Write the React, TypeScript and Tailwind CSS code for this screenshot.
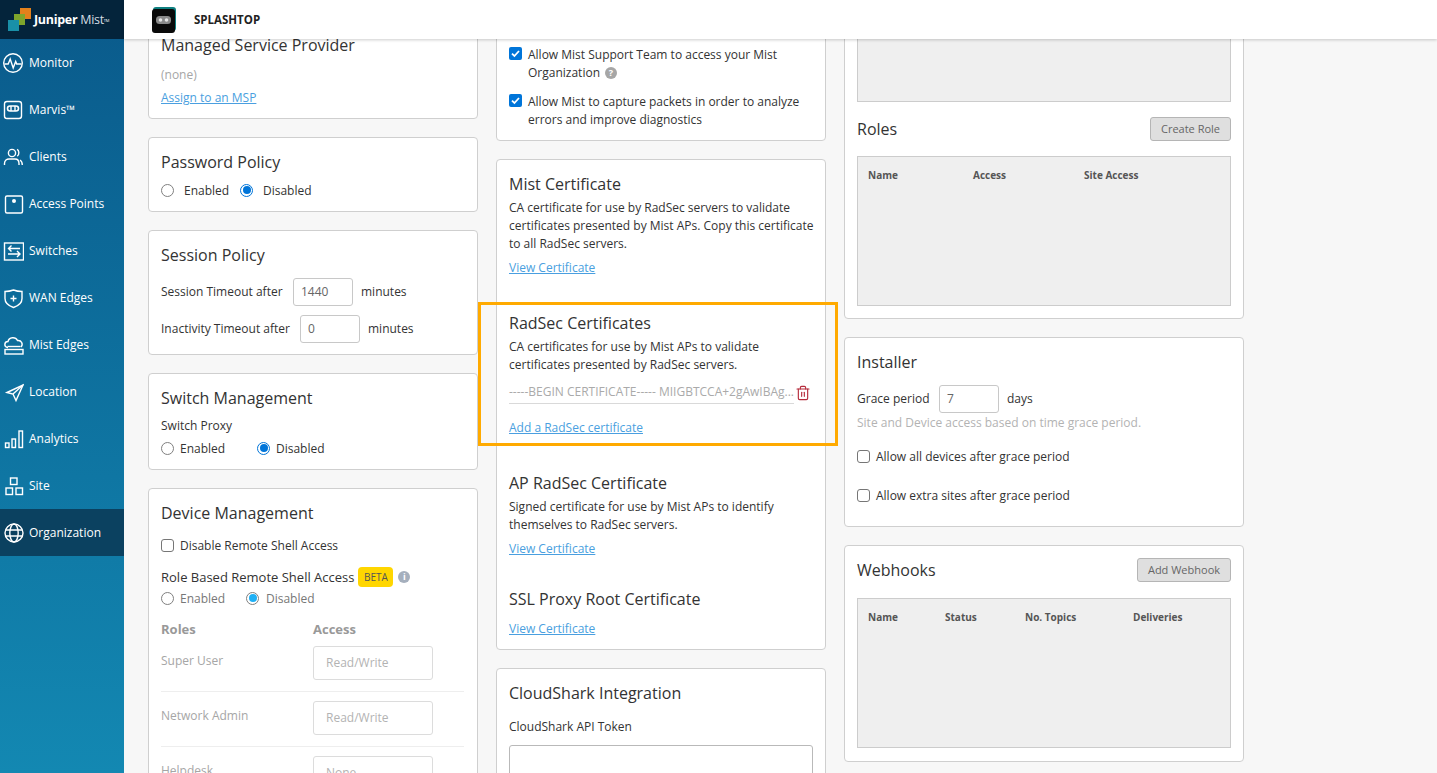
import React from 'react';
import { Trash2 } from 'lucide-react';

const navItems = [
  { label: 'Monitor', icon: 'monitor' },
  { label: 'Marvis™', icon: 'marvis' },
  { label: 'Clients', icon: 'clients' },
  { label: 'Access Points', icon: 'ap' },
  { label: 'Switches', icon: 'switches' },
  { label: 'WAN Edges', icon: 'wan' },
  { label: 'Mist Edges', icon: 'mist' },
  { label: 'Location', icon: 'location' },
  { label: 'Analytics', icon: 'analytics' },
  { label: 'Site', icon: 'site' },
  { label: 'Organization', icon: 'org' },
];

const NavIcon: React.FC<{ name: string }> = ({ name }) => {
  const common = { width: 22, height: 22, viewBox: '0 0 22 22', fill: 'none', stroke: 'white', strokeWidth: 1.4 };
  switch (name) {
    case 'monitor':
      return (
        <svg {...common}>
          <circle cx="11" cy="11" r="9.3" />
          <path d="M2.5 12h3.7l2-5 3 9 2.5-6.5 1 2.5h4.8" />
        </svg>
      );
    case 'marvis':
      return (
        <svg {...common}>
          <rect x="2.5" y="2.5" width="17" height="17" rx="2.5" />
          <rect x="5.5" y="7" width="11" height="5" rx="2.5" strokeWidth="1.6" />
          <path d="M9 7v5M13 7v5" />
        </svg>
      );
    case 'clients':
      return (
        <svg {...common}>
          <circle cx="10" cy="7" r="3.6" />
          <path d="M2.5 19v-1.5c0-3 2.5-4.5 4.5-4.5h6c2.2 0 4 1.7 4 4.500V19" />
          <path d="M15 3.400c2.300.8 2.600 5.600.2 6.800M18 14c1.200.7 2.300 2 2.300 5" />
        </svg>
      );
    case 'ap':
      return (
        <svg {...common}>
          <rect x="3.500" y="3" width="17" height="17" rx="1.500" />
          <circle cx="12" cy="8" r="2" fill="white" stroke="none" />
        </svg>
      );
    case 'switches':
      return (
        <svg {...common}>
          <rect x="2.500" y="3" width="19" height="17" />
          <path d="M18 8.500H6.500M9.500 5.500l-3 3 3 3M6 14h12M15 11l3 3-3 3" />
        </svg>
      );
    case 'wan':
      return (
        <svg {...common}>
          <path d="M3 4.500c3 0 6-.6 8.500-1.500 2.500 1 5.500 1.500 8.500 1.500v7c0 4.500-4 7.500-8.500 9-4.500-1.500-8.500-4.500-8.500-9z" />
          <path d="M8.500 11.500h6M11.500 8.500v6" />
        </svg>
      );
    case 'mist':
      return (
        <svg {...common}>
          <path d="M6 13.500H5.500c-4-1-3.200-6 .5-6 1-4.500 7.500-5 9.500-1 4-.5 6 3.700 3.500 6.500" />
          <path d="M5.500 12.500h13" />
          <rect x="3" y="15.500" width="18" height="4.500" />
        </svg>
      );
    case 'location':
      return (
        <svg {...common}>
          <path d="M5 11.500 21 4l-7 15.500-3-6.500z" />
          <path d="M11 13 21 4" />
        </svg>
      );
    case 'analytics':
      return (
        <svg {...common}>
          <rect x="3.500" y="15" width="3.500" height="4.500" />
          <rect x="10" y="11" width="3.500" height="8.500" />
          <rect x="17" y="3" width="3.500" height="16.500" />
        </svg>
      );
    case 'site':
      return (
        <svg {...common}>
          <rect x="8.500" y="3" width="6.500" height="6.500" />
          <rect x="4" y="13" width="6.500" height="6.500" />
          <rect x="14" y="13" width="6.500" height="6.500" />
        </svg>
      );
    default:
      return (
        <svg {...common}>
          <circle cx="12" cy="11" r="9" />
          <ellipse cx="12" cy="11" rx="4.200" ry="9" />
          <path d="M3.800 8h16.400M3.800 14h16.400" />
        </svg>
      );
  }
};

const Card: React.FC<{ className?: string; children: React.ReactNode }> = ({ className = '', children }) => (
  <div className={`bg-white border border-[#cfcfcf] rounded-[4px] shrink-0 px-3 ${className}`}>{children}</div>
);

const Radio: React.FC<{ on?: boolean; faded?: boolean }> = ({ on, faded }) => (
  <span className={`w-[13px] h-[13px] -mt-[2px] rounded-full flex items-center justify-center bg-white shrink-0 ${on && !faded ? 'border-[1.5px] border-[#0075d9]' : 'border border-[#808080]'}`}>
    {on && <span className={`w-[8px] h-[8px] rounded-full ${faded ? 'bg-[#1fb0f5]' : 'bg-[#0075d9]'}`}></span>}
  </span>
);

const Check: React.FC<{ on?: boolean }> = ({ on }) =>
  on ? (
    <span className="w-[13px] h-[13px] rounded-[2px] bg-[#0075d9] flex items-center justify-center shrink-0">
      <svg width="11" height="11" viewBox="0 0 11 11" fill="none" stroke="white" strokeWidth="1.8">
        <path d="M2 5.700 4.400 8 9 3" />
      </svg>
    </span>
  ) : (
    <span className="w-[13px] h-[13px] -mt-[2px] rounded-[3px] border border-[#767676] bg-white shrink-0"></span>
  );

const Title: React.FC<{ className?: string; children: React.ReactNode }> = ({ className = '', children }) => (
  <div className={`text-[16px] leading-[22px] text-[#333] ${className}`}>{children}</div>
);

const Link: React.FC<{ children: React.ReactNode }> = ({ children }) => (
  <span className="text-[12px] leading-[18px] text-[#4a9fe0] underline">{children}</span>
);

const NumInput: React.FC<{ value: string; className?: string }> = ({ value, className = '' }) => (
  <span className={`w-[60px] h-[28px] border border-[#c8c8c8] rounded-[3px] px-[7px] flex items-center text-[#666] ${className}`}>{value}</span>
);

const RoleRow: React.FC<{ label: string; value: string; last?: boolean }> = ({ label, value, last }) => (
  <div className={`flex h-[46px] w-[303px] ${last ? '' : 'border-b border-[#eeeeee]'}`}>
    <span className="w-[152px] text-[#a6a6a6] pt-[6px]">{label}</span>
    <span className="w-[120px] h-[34px] border border-[#dcdcdc] rounded-[3px] px-[12px] flex items-center text-[#b3b3b3]">{value}</span>
  </div>
);

const LeftColumn = () => (
  <div className="w-[330px] flex flex-col gap-[18px] shrink-0">
    <Card className="h-[100px] -mt-[20px] pt-[14px]">
      <Title>Managed Service Provider</Title>
      <div className="text-[#a6a6a6] mt-[10px]">(none)</div>
      <div className="mt-[5px]"><Link>Assign to an MSP</Link></div>
    </Card>
    <Card className="h-[75px] pt-[13px]">
      <Title>Password Policy</Title>
      <div className="flex items-center mt-[9px]">
        <Radio />
        <span className="ml-[10px] w-[56px]">Enabled</span>
        <Radio on />
        <span className="ml-[10px]">Disabled</span>
      </div>
    </Card>
    <Card className="h-[125px] pt-[13px]">
      <Title>Session Policy</Title>
      <div className="flex items-center mt-[12px]">
        <span className="w-[132px]">Session Timeout after</span>
        <NumInput value="1440" />
        <span className="ml-[8px]">minutes</span>
      </div>
      <div className="flex items-center mt-[9px]">
        <span className="w-[139px]">Inactivity Timeout after</span>
        <NumInput value="0" />
        <span className="ml-[8px]">minutes</span>
      </div>
    </Card>
    <Card className="h-[97px] pt-[13px]">
      <Title>Switch Management</Title>
      <div className="mt-[8px]">Switch Proxy</div>
      <div className="flex items-center mt-[5px]">
        <Radio />
        <span className="ml-[6px] w-[77px]">Enabled</span>
        <Radio on />
        <span className="ml-[6px]">Disabled</span>
      </div>
    </Card>
    <Card className="h-[300px] pt-[13px]">
      <Title>Device Management</Title>
      <div className="flex items-center mt-[13px]">
        <Check />
        <span className="ml-[6px]">Disable Remote Shell Access</span>
      </div>
      <div className="flex items-center mt-[12px] h-[20px]">
        <span className="text-[13px]">Role Based Remote Shell Access</span>
        <span className="ml-[4px] w-[35px] h-[20px] rounded-[4px] bg-[#ffd600] text-[10px] flex items-center justify-center text-[#555]">BETA</span>
        <span className="ml-[5px] w-[12px] h-[12px] rounded-full bg-[#a5afbd] text-white text-[9px] font-bold flex items-center justify-center">i</span>
      </div>
      <div className="flex items-center mt-[3px] text-[#777]">
        <Radio />
        <span className="ml-[6px] w-[66px]">Enabled</span>
        <Radio on faded />
        <span className="ml-[7px]">Disabled</span>
      </div>
      <div className="flex mt-[12px] text-[13px] font-bold text-[#999] leading-[18px]">
        <span className="w-[152px]">Roles</span>
        <span>Access</span>
      </div>
      <div className="mt-[8px]">
        <RoleRow label="Super User" value="Read/Write" />
        <div className="h-[9px]"></div>
        <RoleRow label="Network Admin" value="Read/Write" />
        <div className="h-[9px]"></div>
        <RoleRow label="Helpdesk" value="None" last />
      </div>
    </Card>
  </div>
);

const MiddleColumn = () => (
  <div className="w-[330px] flex flex-col gap-[18px] shrink-0">
    <Card className="h-[122px] -mt-[20px] pt-[26px]">
      <div className="flex gap-[6px]">
        <span className="mt-[1px]"><Check on /></span>
        <div>
          Allow Mist Support Team to access your Mist
          <br />
          Organization
          <span className="inline-flex align-middle ml-[5px] mb-[2px] w-[12px] h-[12px] rounded-full bg-[#a6a6a6] text-white text-[9px] font-bold items-center justify-center">?</span>
        </div>
      </div>
      <div className="flex gap-[6px] mt-[11px]">
        <span className="mt-[1px]"><Check on /></span>
        <div>
          Allow Mist to capture packets in order to analyze
          <br />
          errors and improve diagnostics
        </div>
      </div>
    </Card>
    <Card className="h-[491px] pt-[13px]">
      <Title>Mist Certificate</Title>
      <div className="mt-[4px] whitespace-nowrap">
        CA certificate for use by RadSec servers to validate
        <br />
        certificates presented by Mist APs. Copy this certificate
        <br />
        to all RadSec servers.
      </div>
      <div className="mt-[6px]"><Link>View Certificate</Link></div>
      <div className="relative mt-[35px]">
        <div className="absolute -left-[31px] -top-[10px] w-[360px] h-[144px] border-[3px] border-[#ffaa00] pointer-events-none"></div>
        <Title>RadSec Certificates</Title>
        <div className="mt-[4px]">
          CA certificates for use by Mist APs to validate
          <br />
          certificates presented by RadSec servers.
        </div>
        <div className="flex items-center mt-[9px]">
          <span className="w-[285px] h-[21px] border-b border-[#d9d9d9] text-[#aaaaaa] whitespace-nowrap">-----BEGIN CERTIFICATE----- MIIGBTCCA+2gAwIBAg...</span>
          <Trash2 size={16} color="#b52b3b" strokeWidth={1.7} className="ml-[1px] -mt-[2px]" />
        </div>
        <div className="mt-[15px]"><Link>Add a RadSec certificate</Link></div>
      </div>
      <Title className="mt-[35px]">AP RadSec Certificate</Title>
      <div className="mt-[4px]">
        Signed certificate for use by Mist APs to identify
        <br />
        themselves to RadSec servers.
      </div>
      <div className="mt-[6px]"><Link>View Certificate</Link></div>
      <Title className="mt-[30px]">SSL Proxy Root Certificate</Title>
      <div className="mt-[10px]"><Link>View Certificate</Link></div>
    </Card>
    <Card className="h-[200px] pt-[13px]">
      <Title>CloudShark Integration</Title>
      <div className="mt-[14px]">CloudShark API Token</div>
      <div className="mt-[9px] h-[80px] border border-[#b9b9b9] rounded-[3px]"></div>
    </Card>
  </div>
);

const TableBox: React.FC<{ className?: string; children?: React.ReactNode }> = ({ className = '', children }) => (
  <div className={`h-[150px] border border-[#cccccc] bg-[#efefef] px-[10px] pt-[9px] flex items-start text-[10px] font-bold text-[#555] leading-[18px] ${className}`}>{children}</div>
);

const GrayButton: React.FC<{ className?: string; children: React.ReactNode }> = ({ className = '', children }) => (
  <span className={`h-[24px] border border-[#b5b5b5] rounded-[3px] bg-[#dfdfdf] text-[11px] text-[#666] flex items-center justify-center ${className}`}>{children}</span>
);

const RightColumn = () => (
  <div className="w-[400px] flex flex-col gap-[18px] shrink-0">
    <Card className="h-[300px] -mt-[20px]">
      <div className="h-[82px] border border-t-0 border-[#cccccc] bg-[#efefef]"></div>
      <div className="flex items-center justify-between mt-[15px] h-[24px]">
        <Title>Roles</Title>
        <GrayButton className="w-[81px]">Create Role</GrayButton>
      </div>
      <TableBox className="mt-[15px]">
        <span className="w-[105px]">Name</span>
        <span className="w-[111px]">Access</span>
        <span>Site Access</span>
      </TableBox>
    </Card>
    <Card className="h-[190px] pt-[13px]">
      <Title>Installer</Title>
      <div className="flex items-center mt-[12px]">
        <span className="w-[82px]">Grace period</span>
        <NumInput value="7" className="text-[#555]" />
        <span className="ml-[8px]">days</span>
      </div>
      <div className="text-[#b3b3b3] mt-[1px]">Site and Device access based on time grace period.</div>
      <div className="flex items-center mt-[16px]">
        <Check />
        <span className="ml-[6px]">Allow all devices after grace period</span>
      </div>
      <div className="flex items-center mt-[21px]">
        <Check />
        <span className="ml-[6px]">Allow extra sites after grace period</span>
      </div>
    </Card>
    <Card className="h-[217px] pt-[12px]">
      <div className="flex items-center justify-between h-[24px]">
        <Title>Webhooks</Title>
        <GrayButton className="w-[94px]">Add Webhook</GrayButton>
      </div>
      <TableBox className="mt-[16px]">
        <span className="w-[77px]">Name</span>
        <span className="w-[80px]">Status</span>
        <span className="w-[108px]">No. Topics</span>
        <span>Deliveries</span>
      </TableBox>
    </Card>
  </div>
);

export default function App() {
  return (
    <div className="h-screen w-full flex overflow-hidden bg-[#f7f7f7] text-[12px] leading-[18px] text-[#333] font-['Open_Sans',sans-serif]">
      <aside className="w-[124px] shrink-0 flex flex-col bg-gradient-to-b from-[#0a5a8b] to-[#1388b2] text-white">
        <div className="h-[39px] bg-[#04243b] flex items-center pl-[8px] shrink-0">
          <svg width="24" height="24" viewBox="0 0 24 24">
            <rect x="12" y="0" width="11" height="11" fill="#e2811c" />
            <rect x="6" y="6" width="11" height="11" fill="#7ea52c" />
            <rect x="0" y="12" width="11" height="11" fill="#1990a8" />
          </svg>
          <span className="ml-[2px] text-[12.5px] font-bold tracking-[-0.3px] whitespace-nowrap">Juniper <span className="font-normal text-[#d5dde3]">Mist</span><sup className="text-[4px] font-normal">TM</sup></span>
        </div>
        {navItems.map((item) => (
          <div key={item.label} className={`h-[47px] shrink-0 flex items-center ${item.icon === 'org' ? 'bg-[#0b4160]' : ''}`}>
            <span className="w-[29px] pl-[2px] shrink-0 flex"><NavIcon name={item.icon} /></span>
            <span className="text-[12px] whitespace-nowrap">{item.label}</span>
          </div>
        ))}
      </aside>
      <div className="flex-1 flex flex-col min-w-0">
        <header className="h-[39px] shrink-0 bg-white shadow-[0_1px_3px_rgba(0,0,0,0.2)] z-10 flex items-center pl-[28px]">
          <svg width="24" height="26" viewBox="0 0 24 26">
            <rect x="1" y="0" width="23" height="24" rx="3" fill="#0e7f80" />
            <rect x="0" y="2" width="23" height="24" rx="3" fill="#0a0a0a" />
            <rect x="4" y="9" width="15" height="8" rx="3.500" fill="#8a8a8a" />
            <circle cx="8.500" cy="13" r="1.800" fill="#e5e5e5" />
            <circle cx="14.500" cy="13" r="1.800" fill="#e5e5e5" />
          </svg>
          <span className="ml-[18px] text-[11.500px] font-bold text-[#222]">SPLASHTOP</span>
        </header>
        <main className="flex-1 overflow-hidden flex gap-[18px] pl-[24px]">
          <LeftColumn />
          <MiddleColumn />
          <RightColumn />
        </main>
      </div>
    </div>
  );
}
